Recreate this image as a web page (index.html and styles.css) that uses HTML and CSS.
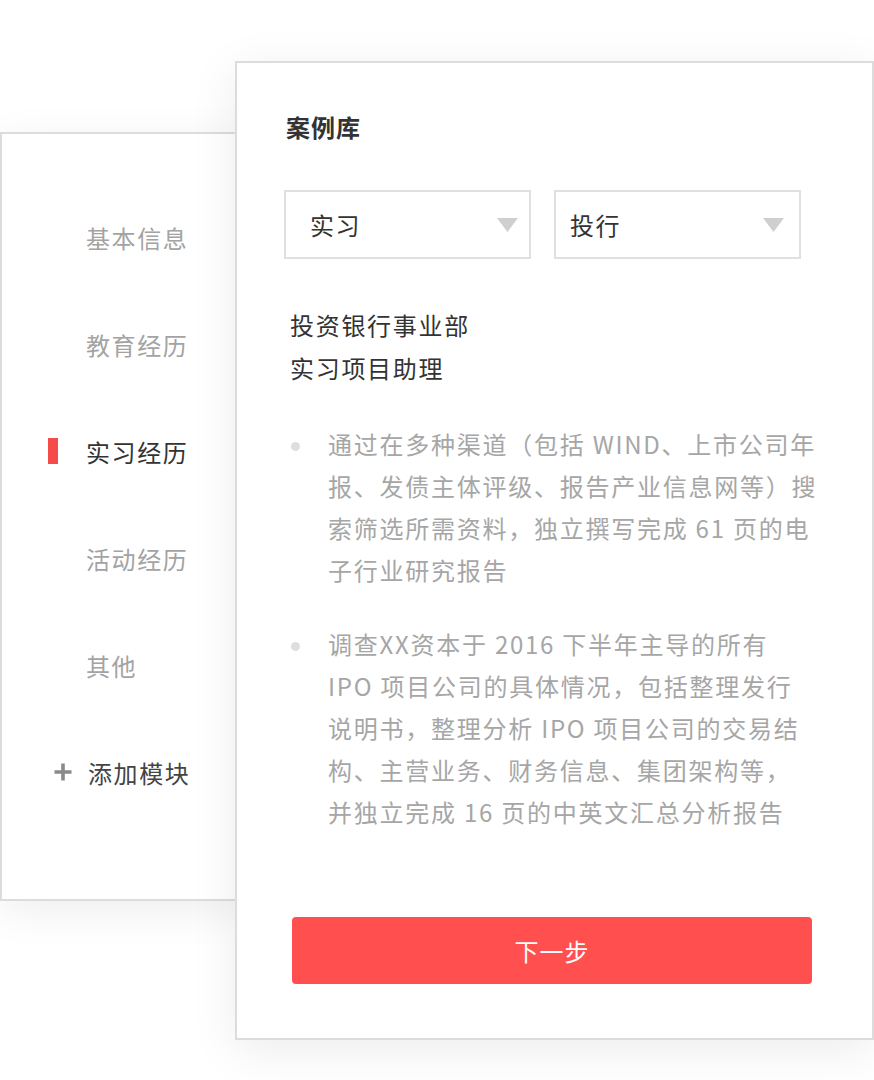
FILE: index.html
```html
<!DOCTYPE html>
<html lang="zh">
<head>
<meta charset="utf-8">
<title>案例库</title>
<link rel="stylesheet" href="styles.css">
</head>
<body>
<div class="stage">
  <aside class="side">
    <ul class="nav">
      <li class="nav-item"><span class="mark"></span><span class="label">基本信息</span></li>
      <li class="nav-item"><span class="mark"></span><span class="label">教育经历</span></li>
      <li class="nav-item active"><span class="mark"></span><span class="label">实习经历</span></li>
      <li class="nav-item"><span class="mark"></span><span class="label">活动经历</span></li>
      <li class="nav-item"><span class="mark"></span><span class="label">其他</span></li>
      <li class="nav-item add">
        <svg class="plus" width="20" height="20" viewBox="0 0 20 20"><path d="M10 1.5V18.5M1.5 10H18.5" stroke="#8a8a8a" stroke-width="3.6" fill="none"/></svg>
        <span class="label">添加模块</span>
      </li>
    </ul>
  </aside>
  <main class="panel">
    <h1 class="title">案例库</h1>
    <div class="selects">
      <div class="select first"><span>实习</span><svg width="21" height="14" viewBox="0 0 21 14"><polygon points="0,0 21,0 10.5,14" fill="#cfcfcf"/></svg></div>
      <div class="select second"><span>投行</span><svg width="21" height="14" viewBox="0 0 21 14"><polygon points="0,0 21,0 10.5,14" fill="#cfcfcf"/></svg></div>
    </div>
    <div class="company">
      <div>投资银行事业部</div>
      <div>实习项目助理</div>
    </div>
    <ul class="bullets">
      <li class="bullet"><span class="dot"></span><p class="btext">通过在多种渠道（包括 WIND、上市公司年<br>报、发债主体评级、报告产业信息网等）搜<br>索筛选所需资料，独立撰写完成 61 页的电<br>子行业研究报告</p></li>
      <li class="bullet"><span class="dot"></span><p class="btext">调查XX资本于 2016 下半年主导的所有<br>IPO 项目公司的具体情况，包括整理发行<br>说明书，整理分析 IPO 项目公司的交易结<br>构、主营业务、财务信息、集团架构等，<br>并独立完成 16 页的中英文汇总分析报告</p></li>
    </ul>
    <button class="next">下一步</button>
  </main>
</div>
</body>
</html>
```

FILE: styles.css
```css
* { box-sizing: border-box; }
html, body {
  margin: 0;
  padding: 0;
  background: #ffffff;
}
body {
  font-family: "Noto Sans CJK SC", "Noto Sans", sans-serif;
  width: 874px;
  height: 1080px;
  overflow: hidden;
}
.stage {
  display: flex;
  align-items: flex-start;
}
.side {
  flex: none;
  width: 250px;
  height: 769px;
  margin-top: 132px;
  border: 2px solid #dcdcdc;
  background: #fff;
  box-shadow: 0 10px 40px rgba(0,0,0,0.07);
}
.nav {
  list-style: none;
  margin: 0;
  padding: 86px 0 0 0;
  display: flex;
  flex-direction: column;
  gap: 73px;
}
.nav-item {
  display: flex;
  align-items: center;
  height: 34px;
  padding-left: 46px;
  font-size: 24px;
  letter-spacing: 1.6px;
  color: #a3a3a3;
}
.mark {
  width: 10px;
  height: 26px;
  margin-right: 28px;
  background: transparent;
}
.nav-item.active { color: #333; }
.nav-item.active .mark { background: #f64b4b; }
.nav-item.add { color: #444; }
.plus {
  margin-left: 5px;
  margin-right: 15px;
}
.panel {
  flex: none;
  position: relative;
  margin-left: -15px;
  margin-top: 61px;
  width: 639px;
  height: 979px;
  border: 2px solid #dcdcdc;
  background: #fff;
  box-shadow: 0 10px 45px rgba(0,0,0,0.08);
  padding: 47px 0 0 47px;
  display: flex;
  flex-direction: column;
  align-items: flex-start;
}
.title {
  margin: 0 0 0 2px;
  font-size: 24px;
  line-height: 34px;
  font-weight: 700;
  letter-spacing: 1px;
  color: #333;
}
.selects {
  margin-top: 46px;
  display: flex;
  gap: 23px;
}
.select {
  width: 247px;
  height: 69px;
  border: 2px solid #e0e0e0;
  display: flex;
  align-items: center;
  justify-content: space-between;
  font-size: 24px;
  letter-spacing: 1.5px;
  color: #333;
}
.select.first { padding: 0 11px 0 24px; }
.select.second { padding: 0 15px 0 14px; }
.company {
  margin: 44px 0 0 6px;
  font-size: 24px;
  line-height: 43px;
  letter-spacing: 1.7px;
  color: #333;
}
.bullets {
  list-style: none;
  margin: 34px 0 0 7px;
  padding: 0;
  display: flex;
  flex-direction: column;
  gap: 32px;
}
.bullet {
  display: flex;
  align-items: flex-start;
}
.dot {
  flex: none;
  width: 9px;
  height: 9px;
  border-radius: 50%;
  background: #dedede;
  margin-top: 19px;
  margin-right: 28px;
}
.btext {
  margin: 0;
  font-size: 24px;
  line-height: 42px;
  letter-spacing: 1.75px;
  color: #a6a6a6;
  white-space: nowrap;
}
.next {
  margin: 84px 0 0 8px;
  width: 520px;
  height: 67px;
  border: none;
  border-radius: 4px;
  background: #ff4f4f;
  color: #fff;
  font-family: "Noto Sans CJK SC", "Noto Sans", sans-serif;
  font-size: 24px;
  letter-spacing: 1px;
}
```
